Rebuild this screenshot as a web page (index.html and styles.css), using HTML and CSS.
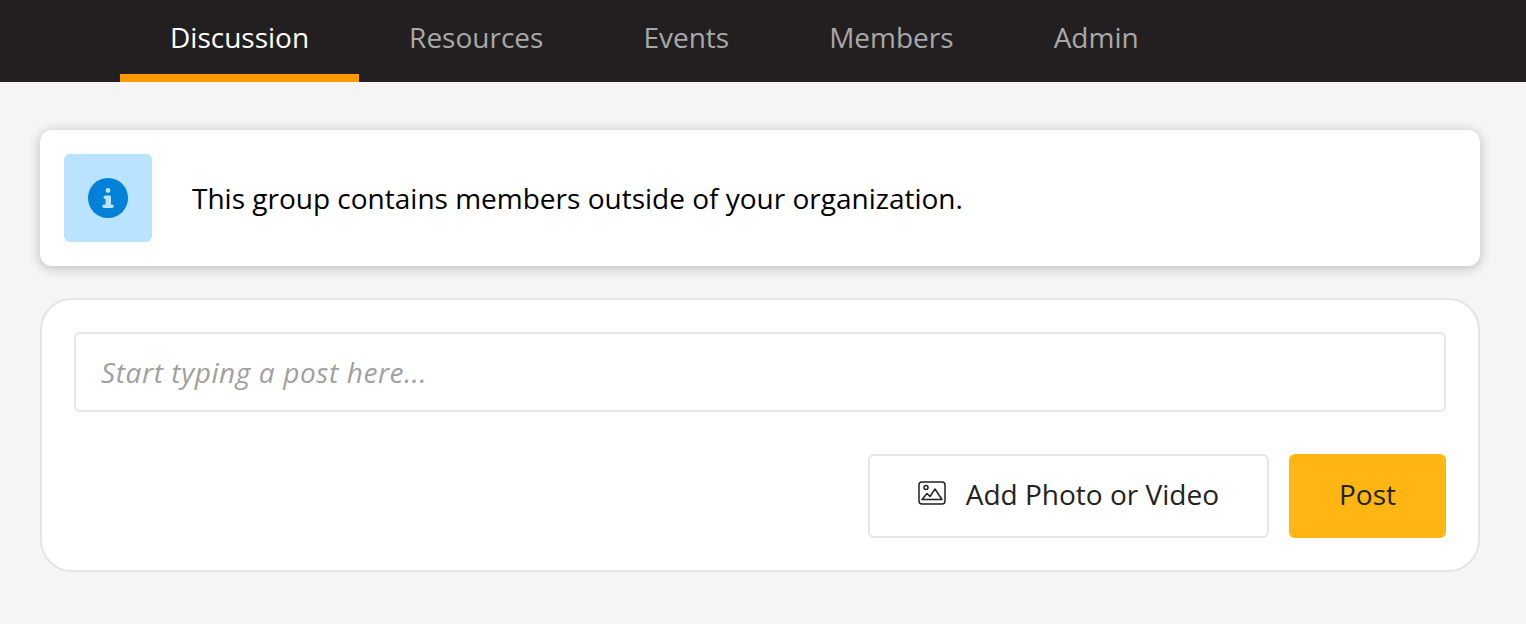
FILE: index.html
```html
<!DOCTYPE html>
<html lang="en">

<head>
    <meta charset="UTF-8">
    <meta name="viewport" content="width=device-width, initial-scale=1.0">
    <title>Group Discussion</title>
    <link rel="stylesheet" href="styles.css">
</head>

<body>
    <!-- Tabs -->
    <div class="navbar">
        <a href="#" class="tab active">Discussion</a>
        <a href="#" class="tab">Resources</a>
        <a href="#" class="tab">Events</a>
        <a href="#" class="tab">Members</a>
        <a href="#" class="tab">Admin</a>
    </div>

    <div class="content">
        <div class="notice">
            <div class="notice-icon">
                <svg width="40" height="40" viewBox="0 0 40 40">
                    <circle cx="20" cy="20" r="20" fill="#0380d8"/>
                    <circle cx="20" cy="12.5" r="2.4" fill="#b9e3fe"/>
                    <path d="M17.5 17.500h4.500a1 1 0 0 1 1 1v8h1a1.750 1.750 0 0 1 0 3.500h-8a1.750 1.750 0 0 1 0-3.500h1.500v-5.500h-0a1.750 1.750 0 0 1-.500-3.500z" fill="#b9e3fe"/>
                </svg>
            </div>
            <p class="notice-text">This group contains members outside of your organization.</p>
        </div>

        <div class="composer">
            <input class="post-input" type="text" placeholder="Start typing a post here...">
            <div class="actions">
                <button class="btn btn-media">
                    <svg class="media-icon" width="28" height="24" viewBox="0 0 28 24" fill="none" stroke="#222" stroke-width="1.500">
                        <rect x="1" y="1" width="26" height="22" rx="3"/>
                        <circle cx="8" cy="6.500" r="2"/>
                        <path d="M4 18.500l5-6 3 3 5-7.500 7 10.500z" stroke-linejoin="round"/>
                    </svg>
                    Add Photo or Video
                </button>
                <button class="btn btn-post">Post</button>
            </div>
        </div>
    </div>
</body>

</html>
```

FILE: styles.css
```css
body {
    font-family: "Open Sans", sans-serif;
    margin: 0;
    padding: 0;
    background-color: #f5f5f5;
    color: #222;
}

.navbar {
    display: flex;
    height: 82px;
    padding-left: 120px;
    background-color: #231f20;
}

.tab {
    display: flex;
    align-items: center;
    height: 74px;
    padding: 0 50px;
    font-size: 28px;
    color: #a8a8a8;
    text-decoration: none;
}

.tab.active {
    color: #fff;
    border-bottom: 8px solid #ff9b00;
}

.content {
    padding: 48px 46px 0 40px;
}

.notice {
    display: flex;
    align-items: center;
    gap: 40px;
    padding: 24px;
    background-color: #fff;
    border-radius: 12px;
    box-shadow: 0 2px 12px rgba(0, 0, 0, 0.25);
}

.notice-icon {
    display: flex;
    align-items: center;
    justify-content: center;
    width: 88px;
    height: 88px;
    background-color: #b9e3fe;
    border-radius: 6px;
}

.notice-text {
    margin: 0;
    font-size: 28px;
    color: #000;
}

.composer {
    margin-top: 32px;
    padding: 32px;
    background-color: #fff;
    border: 2px solid #e5e5e5;
    border-radius: 32px;
}

.post-input {
    display: block;
    width: 100%;
    height: 80px;
    padding: 0 25px;
    box-sizing: border-box;
    font-family: inherit;
    font-size: 28px;
    font-style: italic;
    letter-spacing: 0.6px;
    border: 2px solid #e5e5e5;
    border-radius: 6px;
}

.post-input::placeholder {
    color: #a0a0a0;
}

.actions {
    display: flex;
    justify-content: flex-end;
    gap: 20px;
    margin-top: 42px;
}

.btn {
    display: flex;
    align-items: center;
    height: 84px;
    padding-bottom: 6px;
    font-family: inherit;
    font-size: 28px;
    color: #222;
    border-radius: 6px;
    cursor: pointer;
}

.btn-media {
    gap: 20px;
    padding-left: 48px;
    padding-right: 48px;
    background-color: #fff;
    border: 2px solid #e5e5e5;
}

.media-icon {
    margin-bottom: 2px;
}

.btn-post {
    padding-left: 50px;
    padding-right: 50px;
    background-color: #ffb612;
    border: none;
}
```
